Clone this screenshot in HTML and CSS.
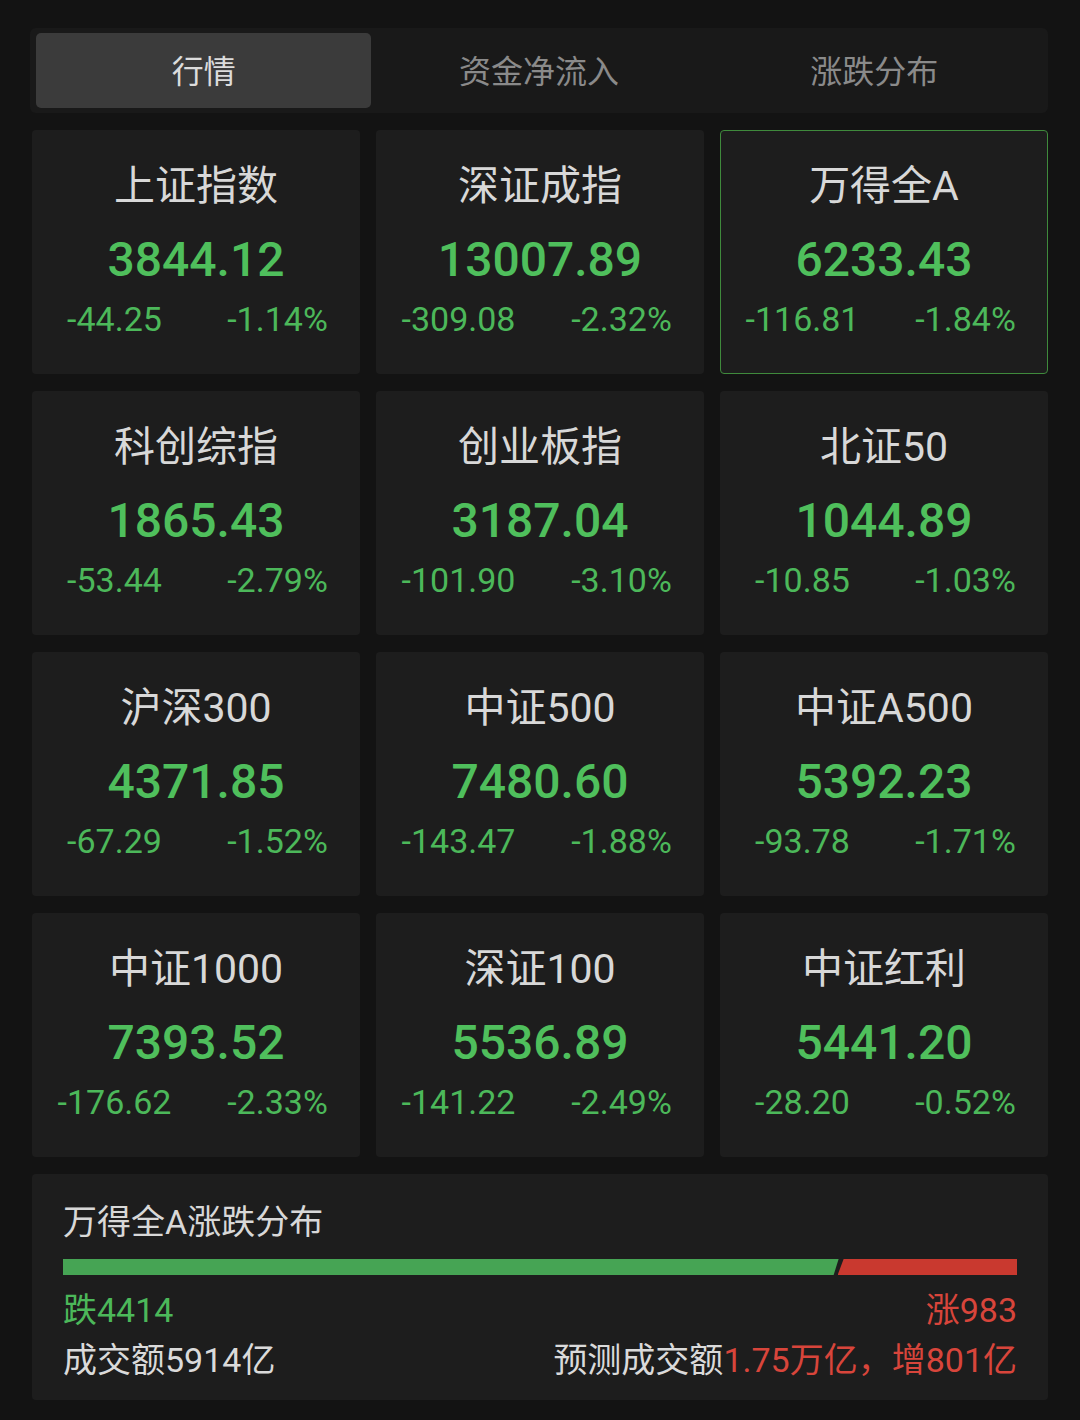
FILE: index.html
```html
<!DOCTYPE html>
<html lang="zh-CN">
<head>
  <meta charset="UTF-8">
  <meta name="viewport" content="width=device-width, initial-scale=1.0">
  <title>行情</title>
  <link rel="stylesheet" href="styles.css">
</head>
<body>
  <div class="page">
    <div class="tabs">
      <div class="tab active">行情</div>
      <div class="tab">资金净流入</div>
      <div class="tab">涨跌分布</div>
    </div>

    <div class="grid">
      <div class="card">
        <div class="name">上证指数</div>
        <div class="price">3844.12</div>
        <div class="change"><span>-44.25</span><span>-1.14%</span></div>
      </div>
      <div class="card">
        <div class="name">深证成指</div>
        <div class="price">13007.89</div>
        <div class="change"><span>-309.08</span><span>-2.32%</span></div>
      </div>
      <div class="card selected">
        <div class="name">万得全A</div>
        <div class="price">6233.43</div>
        <div class="change"><span>-116.81</span><span>-1.84%</span></div>
      </div>

      <div class="card">
        <div class="name">科创综指</div>
        <div class="price">1865.43</div>
        <div class="change"><span>-53.44</span><span>-2.79%</span></div>
      </div>
      <div class="card">
        <div class="name">创业板指</div>
        <div class="price">3187.04</div>
        <div class="change"><span>-101.90</span><span>-3.10%</span></div>
      </div>
      <div class="card">
        <div class="name">北证50</div>
        <div class="price">1044.89</div>
        <div class="change"><span>-10.85</span><span>-1.03%</span></div>
      </div>

      <div class="card">
        <div class="name">沪深300</div>
        <div class="price">4371.85</div>
        <div class="change"><span>-67.29</span><span>-1.52%</span></div>
      </div>
      <div class="card">
        <div class="name">中证500</div>
        <div class="price">7480.60</div>
        <div class="change"><span>-143.47</span><span>-1.88%</span></div>
      </div>
      <div class="card">
        <div class="name">中证A500</div>
        <div class="price">5392.23</div>
        <div class="change"><span>-93.78</span><span>-1.71%</span></div>
      </div>

      <div class="card">
        <div class="name">中证1000</div>
        <div class="price">7393.52</div>
        <div class="change"><span>-176.62</span><span>-2.33%</span></div>
      </div>
      <div class="card">
        <div class="name">深证100</div>
        <div class="price">5536.89</div>
        <div class="change"><span>-141.22</span><span>-2.49%</span></div>
      </div>
      <div class="card">
        <div class="name">中证红利</div>
        <div class="price">5441.20</div>
        <div class="change"><span>-28.20</span><span>-0.52%</span></div>
      </div>
    </div>

    <div class="breadth">
      <div class="breadth-title">万得全A涨跌分布</div>
      <div class="bar">
        <div class="bar-down" style="width: 81.3%"></div>
        <div class="bar-up"></div>
      </div>
      <div class="counts">
        <span class="down">跌4414</span>
        <span class="up">涨983</span>
      </div>
      <div class="turnover">
        <span>成交额5914亿</span>
        <span>预测成交额<em>1.75万亿，增801亿</em></span>
      </div>
    </div>
  </div>
</body>
</html>
```

FILE: styles.css
```css
html, body {
  margin: 0;
  padding: 0;
  background-color: #131313;
}

body {
  font-family: Roboto, "Noto Sans CJK SC", sans-serif;
  color: #dadada;
}

.page {
  width: 1016px;
  padding: 28px 32px 20px;
}

.tabs {
  display: flex;
  margin-left: -2px;
  padding: 5px 6px;
  height: 75px;
  background: #191919;
  border-radius: 6px;
}

.tab {
  flex: 1;
  display: flex;
  align-items: center;
  justify-content: center;
  padding-bottom: 4px;
  font-size: 32px;
  color: #8a8a8a;
  border-radius: 5px;
}

.tab.active {
  background: #3b3b3b;
  color: #dcdcdc;
}

.grid {
  display: grid;
  grid-template-columns: repeat(3, 1fr);
  column-gap: 16px;
  row-gap: 17px;
  margin-top: 17px;
}

.card {
  height: 244px;
  background: #1d1d1d;
  border-radius: 4px;
  box-sizing: border-box;
  display: flex;
  flex-direction: column;
  align-items: center;
  border: 1px solid transparent;
}

.card.selected {
  border-color: #3f8a3c;
}

.name {
  margin-top: 31px;
  height: 48px;
  line-height: 48px;
  font-size: 41px;
  color: #d8d8d8;
}

.price {
  margin-top: 23px;
  height: 54px;
  line-height: 54px;
  font-size: 48px;
  font-weight: 500;
  color: #4fbf5c;
}

.change {
  margin-top: 12px;
  width: 100%;
  display: grid;
  grid-template-columns: 1fr 1fr;
  font-size: 34px;
  line-height: 40px;
  color: #4cb85a;
}

.change span {
  text-align: center;
}

.breadth {
  margin-top: 17px;
  height: 226px;
  background: #1d1d1d;
  border-radius: 4px;
  padding: 0 31px;
  box-sizing: border-box;
}

.breadth-title {
  padding-top: 28px;
  font-size: 34px;
  line-height: 40px;
  color: #d8d8d8;
}

.bar {
  display: flex;
  height: 16px;
  margin-top: 17px;
}

.bar-down {
  background: #46a454;
  clip-path: polygon(0 0, 100% 0, calc(100% - 5px) 100%, 0 100%);
}

.bar-up {
  flex: 1;
  margin-left: -1px;
  background: #c9392f;
  clip-path: polygon(6px 0, 100% 0, 100% 100%, 0 100%);
}

.counts, .turnover {
  display: flex;
  justify-content: space-between;
  font-size: 34px;
  line-height: 50px;
}

.counts {
  margin-top: 10px;
}

.down {
  color: #4cb85a;
}

.up {
  color: #d8453b;
}

.turnover em {
  font-style: normal;
  color: #d8453b;
}
```
